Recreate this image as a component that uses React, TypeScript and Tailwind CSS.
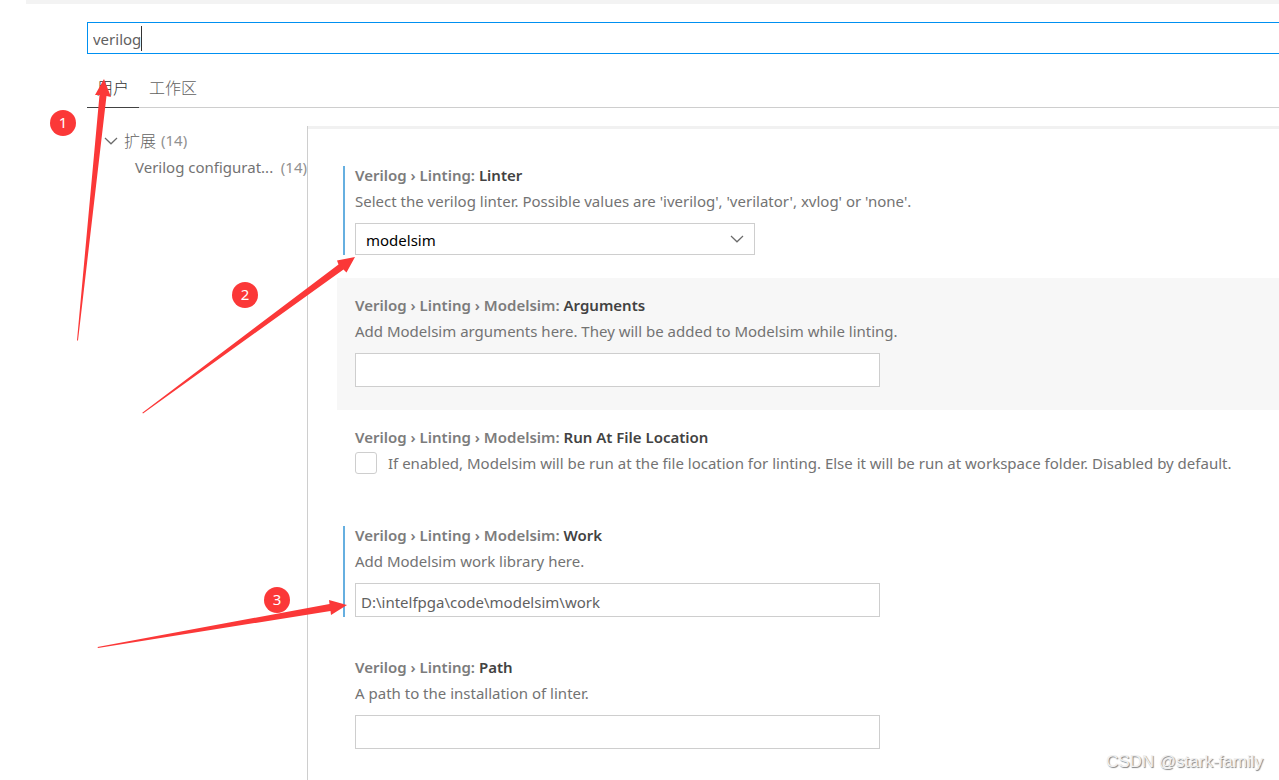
import { useId, type ReactNode } from "react";

function Chevron() {
  return (
    <svg width="14" height="8" viewBox="0 0 14 8" fill="none" stroke="#6b6b6b" strokeWidth="1.2" aria-hidden="true">
      <path d="M1 1l6 5.8L13 1" />
    </svg>
  );
}

type SettingProps = {
  path: string[];
  name: string;
  htmlFor: string;
  modified?: boolean;
  focused?: boolean;
  children: ReactNode;
};

function Setting({ path, name, htmlFor, modified, focused, children }: SettingProps) {
  return (
    <section className={`flex gap-[10px] pt-[14px] pb-[23px] pl-[6px] ${focused ? "bg-[#f7f7f7]" : ""}`}>
      <div className={`mt-1 w-[2px] shrink-0 ${modified ? "bg-[#66afe0]" : ""}`} />
      <div className="min-w-0 flex-1">
        <label htmlFor={htmlFor} className="block font-semibold leading-[26px] text-[#7c7c7c]">
          {path.join(" › ")}: <span className="text-[#424242]">{name}</span>
        </label>
        {children}
      </div>
    </section>
  );
}

function TextSetting({ description, value = "", ...rest }: Omit<SettingProps, "children" | "htmlFor"> & { description: string; value?: string }) {
  const id = useId();
  return (
    <Setting {...rest} htmlFor={id}>
      <p className="leading-[26px]">{description}</p>
      <input
        id={id}
        type="text"
        defaultValue={value}
        className="mt-[9px] block h-[34px] w-full max-w-[525px] border border-[#cecece] bg-white px-[5px] pt-[3px] text-[#616161] outline-none"
      />
    </Setting>
  );
}

const badge = "absolute flex size-[26px] items-center justify-center rounded-full bg-[#fb3838] pb-[2px] text-[15px] text-white";

function Annotations() {
  return (
    <div className="pointer-events-none absolute inset-0">
      <svg className="absolute top-0 left-0" width="400" height="700" viewBox="0 0 400 700" fill="#fb3838" aria-hidden="true">
        <path d="M104 79L111 97L106.500 96L78 340.500L77 340.500L99.500 95L95 95Z" />
        <path d="M355 257L346.500 272.500L343.500 269.500L143 413.500L142.300 412.700L338.500 264.500L337 260.500Z" />
        <path d="M347 605L331 615L330.500 611L98 648L97.500 647L329.500 604L329 600Z" />
      </svg>
      <span className={`${badge} top-[110px] left-[50px]`}>1</span>
      <span className={`${badge} top-[282px] left-[232px]`}>2</span>
      <span className={`${badge} top-[587px] left-[264px]`}>3</span>
    </div>
  );
}

export default function App() {
  return (
    <div className="relative h-screen overflow-hidden bg-white font-['Noto_Sans','Noto_Sans_CJK_SC',sans-serif] text-[15px] text-[#737373]">
      <div className="flex h-full flex-col">
        <div className="ml-[26px] h-1 shrink-0 bg-[#f3f3f3]" />
        <main className="flex min-h-0 flex-1 flex-col pt-[18px] pl-[87px]">
          <label className="flex h-8 shrink-0 items-center border border-r-0 border-[#0090f1] pl-[5px]">
            <input
              type="text"
              aria-label="搜索设置"
              defaultValue="verilog"
              className="pt-[2px] [field-sizing:content] text-[#616161] outline-none"
            />
            <span className="h-[25px] w-px bg-[#333]" />
          </label>
          <nav className="mt-4 flex h-[38px] shrink-0 border-b border-[#cecece] text-base font-light text-[#616161]">
            <button type="button" className="-mb-px border-b border-[#424242] px-[10px] pb-[2px] text-[#333333]">
              用户
            </button>
            <button type="button" className="px-[10px] pb-[2px]">工作区</button>
          </nav>
          <div className="mt-[18px] flex min-h-0 flex-1">
            <aside className="w-[220px] shrink-0 pt-px leading-[27px]">
              <button type="button" className="flex h-[27px] w-full items-center pl-[17px]">
                <Chevron />
                <span className="ml-[6px] text-base font-light text-[#616161]">扩展</span>
                <span className="ml-[5px] text-[#919191]">(14)</span>
              </button>
              <button type="button" className="flex w-full justify-between pl-12 text-left whitespace-nowrap">
                <span>Verilog configurat...</span>
                <span className="text-[#919191]">(14)</span>
              </button>
            </aside>
            <div className="min-w-0 flex-1 border-l border-[#cecece]">
              <div className="h-[3px] bg-[#f1f1f1]" />
              <div className="mt-[19px] ml-[29px]">
                <Setting path={["Verilog", "Linting"]} name="Linter" htmlFor="linter" modified>
                  <p className="leading-[26px]">
                    Select the verilog linter. Possible values are 'iverilog', 'verilator', xvlog' or 'none'.
                  </p>
                  <div className="relative mt-[9px] max-w-[400px]">
                    <select
                      id="linter"
                      defaultValue="modelsim"
                      className="block h-8 w-full appearance-none border border-[#cecece] bg-white px-[10px] pt-[2px] text-black outline-none"
                    >
                      <option>modelsim</option>
                    </select>
                    <span className="pointer-events-none absolute inset-y-0 right-[11px] flex items-center">
                      <Chevron />
                    </span>
                  </div>
                </Setting>
                <TextSetting
                  path={["Verilog", "Linting", "Modelsim"]}
                  name="Arguments"
                  focused
                  description="Add Modelsim arguments here. They will be added to Modelsim while linting."
                />
                <Setting path={["Verilog", "Linting", "Modelsim"]} name="Run At File Location" htmlFor="run-at-file">
                  <div className="mb-[9px] flex h-[26px] items-center gap-[11px]">
                    <input
                      id="run-at-file"
                      type="checkbox"
                      className="size-[22px] shrink-0 appearance-none rounded-[3px] border border-[#cecece] bg-white"
                    />
                    <span className="whitespace-nowrap">
                      If enabled, Modelsim will be run at the file location for linting. Else it will be run at workspace folder. Disabled by default.
                    </span>
                  </div>
                </Setting>
                <TextSetting
                  path={["Verilog", "Linting", "Modelsim"]}
                  name="Work"
                  modified
                  description="Add Modelsim work library here."
                  value="D:\intelfpga\code\modelsim\work"
                />
                <TextSetting path={["Verilog", "Linting"]} name="Path" description="A path to the installation of linter." />
              </div>
            </div>
          </div>
        </main>
      </div>
      <Annotations />
      <span className="absolute right-4 bottom-[6px] font-['Liberation_Sans',sans-serif] text-[17px] text-[#f0f0f0] [text-shadow:1px_1px_1px_#808080]">
        CSDN @stark-family
      </span>
    </div>
  );
}
